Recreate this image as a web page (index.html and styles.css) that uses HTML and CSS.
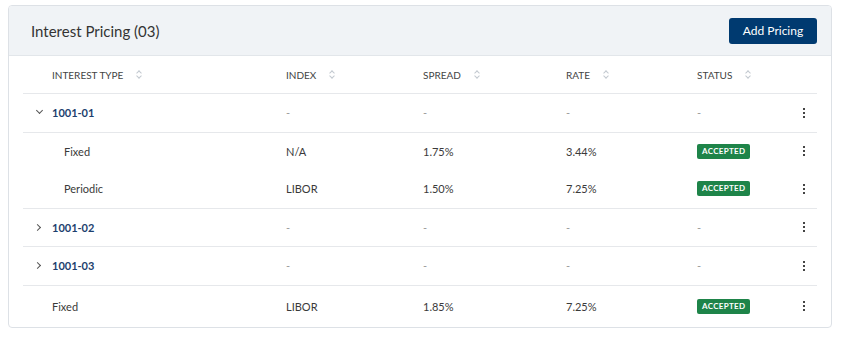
FILE: index.html
```html
<!DOCTYPE html>
<html>
<head>
  <meta charset="UTF-8">
  <meta name="viewport" content="width=device-width, initial-scale=1.0">
  <title>Interest Pricing</title>
  <link rel="stylesheet" href="styles.css">
</head>
<body>
  <div class="card">
    <div class="card-header">
      <h2 class="card-title">Interest Pricing (03)</h2>
      <button class="btn-primary">Add Pricing</button>
    </div>

    <div class="pricing-table">
      <div class="row head">
        <div class="cell first">INTEREST TYPE <span class="sort"></span></div>
        <div class="cell">INDEX <span class="sort"></span></div>
        <div class="cell">SPREAD <span class="sort"></span></div>
        <div class="cell">RATE <span class="sort"></span></div>
        <div class="cell">STATUS <span class="sort"></span></div>
        <div class="cell"></div>
      </div>

      <div class="group">
        <div class="row">
          <div class="cell first"><span class="chevron down"></span><a class="loan-id">1001-01</a></div>
          <div class="cell dash">-</div>
          <div class="cell dash">-</div>
          <div class="cell dash">-</div>
          <div class="cell dash">-</div>
          <div class="cell"><span class="kebab"></span></div>
        </div>
      </div>

      <div class="group">
        <div class="row sub">
          <div class="cell first indent">Fixed</div>
          <div class="cell">N/A</div>
          <div class="cell">1.75%</div>
          <div class="cell">3.44%</div>
          <div class="cell"><span class="badge">ACCEPTED</span></div>
          <div class="cell"><span class="kebab"></span></div>
        </div>
        <div class="row sub">
          <div class="cell first indent">Periodic</div>
          <div class="cell">LIBOR</div>
          <div class="cell">1.50%</div>
          <div class="cell">7.25%</div>
          <div class="cell"><span class="badge">ACCEPTED</span></div>
          <div class="cell"><span class="kebab"></span></div>
        </div>
      </div>

      <div class="group">
        <div class="row">
          <div class="cell first"><span class="chevron right"></span><a class="loan-id">1001-02</a></div>
          <div class="cell dash">-</div>
          <div class="cell dash">-</div>
          <div class="cell dash">-</div>
          <div class="cell dash">-</div>
          <div class="cell"><span class="kebab"></span></div>
        </div>
      </div>

      <div class="group">
        <div class="row">
          <div class="cell first"><span class="chevron right"></span><a class="loan-id">1001-03</a></div>
          <div class="cell dash">-</div>
          <div class="cell dash">-</div>
          <div class="cell dash">-</div>
          <div class="cell dash">-</div>
          <div class="cell"><span class="kebab"></span></div>
        </div>
      </div>

      <div class="group last">
        <div class="row">
          <div class="cell first">Fixed</div>
          <div class="cell">LIBOR</div>
          <div class="cell">1.85%</div>
          <div class="cell">7.25%</div>
          <div class="cell"><span class="badge">ACCEPTED</span></div>
          <div class="cell"><span class="kebab"></span></div>
        </div>
      </div>
    </div>
  </div>
</body>
</html>
```

FILE: styles.css
```css
* {
  box-sizing: border-box;
  font-family: Lato, "Liberation Sans", sans-serif;
}

body {
  margin: 0;
  padding: 5px 16px 0 8px;
  background: #fff;
  color: #3a3a3a;
}

.card {
  border: 1px solid #dde1e6;
  border-radius: 4px;
  overflow: hidden;
}

.card-header {
  display: flex;
  align-items: center;
  justify-content: space-between;
  height: 50px;
  padding: 0 14px 0 22px;
  background: #f0f3f6;
  border-bottom: 1px solid #e2e6ea;
}

.card-title {
  margin: 0;
  font-size: 15px;
  font-weight: normal;
  color: #333;
}

.btn-primary {
  height: 26px;
  width: 88px;
  padding: 0;
  border: none;
  border-radius: 3px;
  background: #003a70;
  color: #fff;
  font-size: 12px;
  font-weight: normal;
  cursor: pointer;
}

.pricing-table {
  padding: 0 14px;
}

.row {
  display: grid;
  grid-template-columns: 263px 137px 143px 131px 1fr 26px;
  align-items: center;
  height: 37.5px;
  font-size: 11px;
}

.row.head {
  height: 38px;
  font-size: 10px;
  color: #444;
  border-bottom: 1px solid #e6e8eb;
}

.group {
  border-bottom: 1px solid #e6e8eb;
}

.group.last {
  border-bottom: none;
}

.group.last .row {
  height: 41px;
}

.cell {
  display: flex;
  align-items: center;
  white-space: nowrap;
}

.cell.first {
  padding-left: 29px;
  position: relative;
}

.cell.indent {
  padding-left: 41px;
}

.dash {
  color: #999;
}

.loan-id {
  color: #1d3f6e;
  font-weight: bold;
}

.sort {
  display: inline-block;
  width: 6px;
  height: 9px;
  margin-left: 13px;
  position: relative;
}

.sort::before,
.sort::after {
  content: "";
  position: absolute;
  left: 1px;
  width: 3px;
  height: 3px;
  border-left: 1px solid #c2c8cf;
  border-top: 1px solid #c2c8cf;
}

.sort::before {
  top: 1px;
  transform: rotate(45deg);
}

.sort::after {
  bottom: 1px;
  transform: rotate(225deg);
}

.chevron {
  position: absolute;
  width: 5px;
  height: 5px;
  border-right: 1px solid #555;
  border-bottom: 1px solid #555;
}

.chevron.down {
  transform: translateY(-2px) rotate(45deg);
  left: 14px;
}

.chevron.right {
  transform: rotate(-45deg);
  left: 12px;
}

.badge {
  display: inline-block;
  padding: 2px 5px;
  border-radius: 2px;
  background: #1e8449;
  color: #fff;
  font-size: 8px;
  font-weight: bold;
  letter-spacing: 0.3px;
  line-height: 11px;
}

.kebab {
  display: block;
  width: 2px;
  height: 2px;
  margin: 0 auto;
  background: #444;
  box-shadow: 0 -4px 0 #444, 0 4px 0 #444;
}
```
